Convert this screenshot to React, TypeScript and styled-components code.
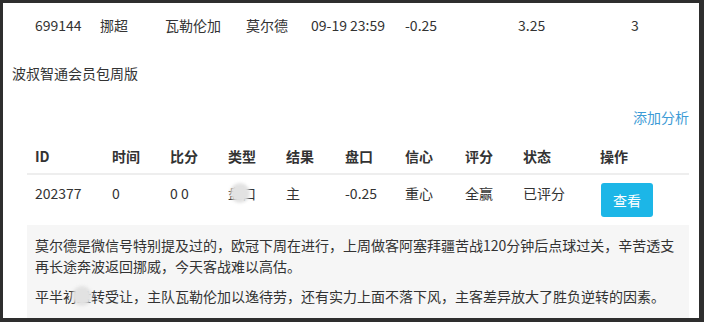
import React, { FunctionComponent } from "react"
import styled, { createGlobalStyle } from "styled-components"

const GlobalStyle = createGlobalStyle`
    html, body {
        margin: 0;
        padding: 0;
        background: #2e2e2e;
    }
    body {
        font-family: "Noto Sans CJK SC", "Open Sans", sans-serif;
        color: #333;
    }
`

const Frame = styled.div`
    width: 704px;
    height: 322px;
    box-sizing: border-box;
    border-style: solid;
    border-color: #2e2e2e;
    border-width: 3px 5px 4px 3px;
    background: #fff;
    overflow: hidden;
    font-size: 14px;
`

const PrevRow = styled.div`
    display: grid;
    grid-template-columns: 65px 65px 81px 65px 94px 113px 113px 1fr;
    align-items: center;
    height: 44px;
    padding-left: 32px;
    line-height: 20px;
`

const Title = styled.div`
    margin: 16px 0 0 9px;
    line-height: 20px;
`

const LinkRow = styled.div`
    display: flex;
    justify-content: flex-end;
    margin-top: 24px;
    padding-right: 10px;
    line-height: 20px;
`

const AddLink = styled.a`
    color: #3d9bd6;
    text-decoration: none;
    cursor: pointer;
`

const Panel = styled.div`
    margin: 0 10px 0 24px;
`

const Row = styled.div<{ $head?: boolean }>`
    display: grid;
    grid-template-columns: 77px 58px 58px 58px 59px 60px 60px 58px 77px 1fr;
    align-items: start;
    padding: ${(p) => (p.$head ? "19px 0 7px 8px" : "8px 0 8px 8px")};
    line-height: 20px;
    font-weight: ${(p) => (p.$head ? 700 : 400)};
    border-bottom: ${(p) => (p.$head ? "2px solid #eeeeee" : "none")};
`

const ViewButton = styled.button`
    width: 52px;
    height: 34px;
    margin-left: 1px;
    border: none;
    border-radius: 3px;
    background: #1cb6e7;
    color: #fff;
    font-family: inherit;
    font-size: 14px;
    cursor: pointer;
`

// grey blur blot that hides part of a word in the screenshot
const Smudge = styled.span<{ $shift: number }>`
    position: relative;
    &::after {
        content: "";
        position: absolute;
        left: 50%;
        top: 50%;
        width: 20px;
        height: 20px;
        margin: -10px 0 0 ${(p) => p.$shift}px;
        border-radius: 50%;
        background: #e2e2e2;
        filter: blur(1.5px);
    }
`

const Note = styled.div`
    background: #f6f6f6;
    padding: 10px 14px 12px 8px;
    line-height: 21px;
`

const Para = styled.p`
    margin: 0;
    & + & {
        margin-top: 9px;
    }
`

const prev = ["699144", "挪超", "瓦勒伦加", "莫尔德", "09-19 23:59", "-0.25", "3.25", "3"]
const heads = ["ID", "时间", "比分", "类型", "结果", "盘口", "信心", "评分", "状态", "操作"]

const App: FunctionComponent = () => {
    return (
        <>
            <GlobalStyle />
            <Frame>
                <PrevRow>
                    {prev.map((v, i) => (
                        <span key={i}>{v}</span>
                    ))}
                </PrevRow>
                <Title>波叔智通会员包周版</Title>
                <LinkRow>
                    <AddLink>添加分析</AddLink>
                </LinkRow>
                <Panel>
                    <Row $head>
                        {heads.map((h) => (
                            <span key={h}>{h}</span>
                        ))}
                    </Row>
                    <Row>
                        <span>202377</span>
                        <span>0</span>
                        <span>0 0</span>
                        <span>
                            盘<Smudge $shift={-19}>口</Smudge>
                        </span>
                        <span>主</span>
                        <span>-0.25</span>
                        <span>重心</span>
                        <span>全赢</span>
                        <span>已评分</span>
                        <span>
                            <ViewButton>查看</ViewButton>
                        </span>
                    </Row>
                    <Note>
                        <Para>
                            莫尔德是微信号特别提及过的，欧冠下周在进行，上周做客阿塞拜疆苦战120分钟后点球过关，辛苦透支再长途奔波返回挪威，今天客战难以高估。
                        </Para>
                        <Para>
                            平半初<Smudge $shift={-12}>盘</Smudge>转受让，主队瓦勒伦加以逸待劳，还有实力上面不落下风，主客差异放大了胜负逆转的因素。
                        </Para>
                    </Note>
                </Panel>
            </Frame>
        </>
    )
}

export default App
